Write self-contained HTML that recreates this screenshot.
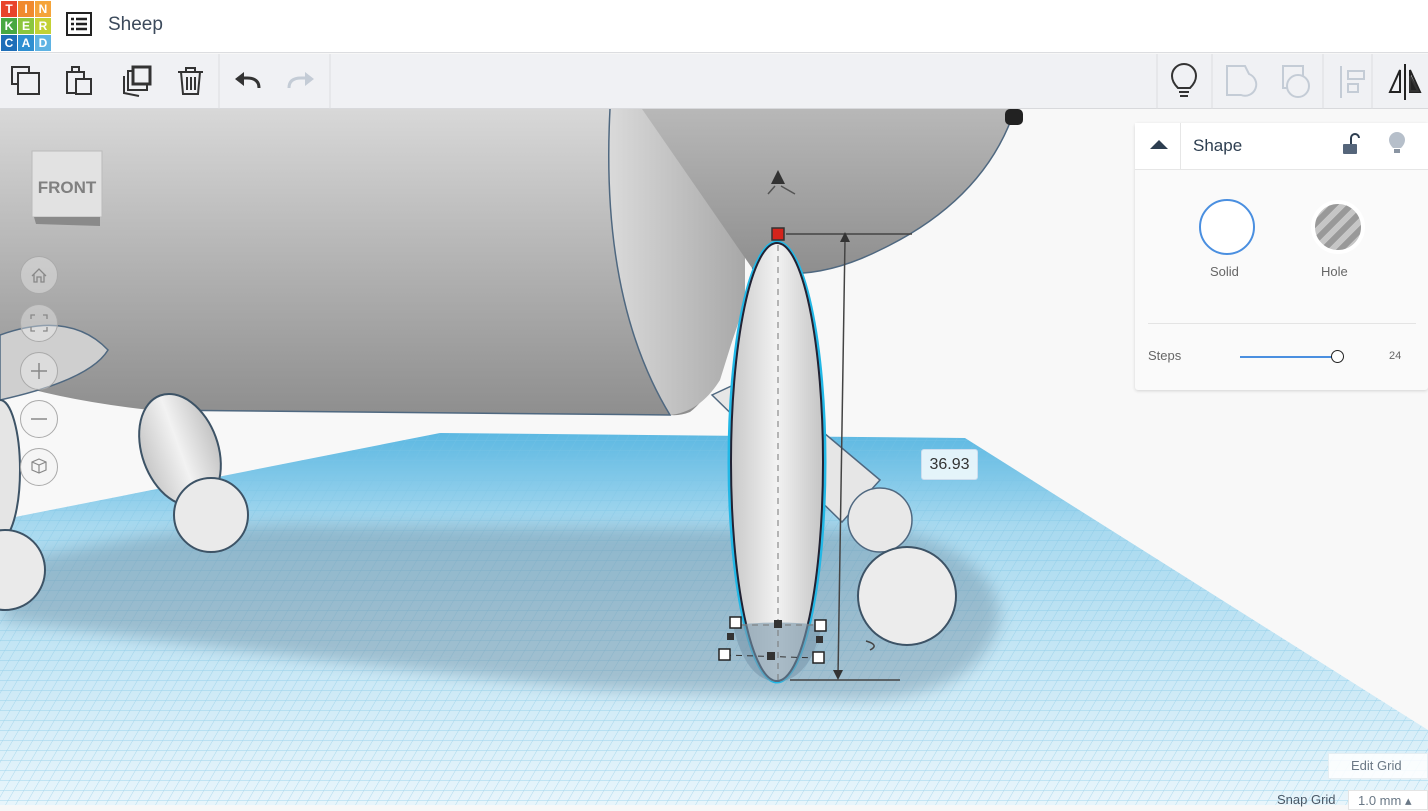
<!DOCTYPE html>
<html><head><meta charset="utf-8"><style>
*{margin:0;padding:0;box-sizing:border-box}
body{width:1428px;height:805px;overflow:hidden;font-family:"Liberation Sans",sans-serif;background:#f7f7f7;position:relative}
.top{position:absolute;left:0;top:0;width:1428px;height:53px;background:#fff;border-bottom:1px solid #dcdde0}
.tb{position:absolute;left:0;top:54px;width:1428px;height:55px;background:#f0f1f4;border-bottom:1px solid #d8d9dc}
.logo{position:absolute;left:1px;top:1px;width:50px;height:50px;display:grid;grid-template-columns:repeat(3,16px);gap:1px}
.logo div{color:#fff;font-weight:bold;font-size:12px;display:flex;align-items:center;justify-content:center}
.panel{position:absolute;left:1135px;top:123px;width:293px;height:267px;background:#fafafa;border-radius:3px;box-shadow:0 1px 3px rgba(0,0,0,.15)}
.ph{height:47px;background:#fff;border-bottom:1px solid #e6e6e6;position:relative}
.vbtn{position:absolute;left:20px;width:38px;height:38px;border-radius:50%;border:1px solid #aaa;background:rgba(240,240,240,.4)}
</style></head><body>
<svg style="position:absolute;left:0;top:0" width="1428" height="805">
<defs>
<linearGradient id="fl" x1="0" y1="0" x2="0" y2="1"><stop offset="0" stop-color="#5cb8e2"/><stop offset=".25" stop-color="#a8d9ef"/><stop offset="1" stop-color="#e8f5fb"/></linearGradient>
<linearGradient id="bd" x1="0" y1="0" x2="0" y2="1"><stop offset="0" stop-color="#d8d8d8"/><stop offset="1" stop-color="#8e8e8e"/></linearGradient>
<linearGradient id="fb" x1="0" y1="0" x2="1" y2="0"><stop offset="0" stop-color="#dadada"/><stop offset="1" stop-color="#a8a8a8"/></linearGradient>
<linearGradient id="hd" x1="0" y1="0" x2="0" y2="1"><stop offset="0" stop-color="#b8b8b8"/><stop offset="1" stop-color="#8e8e8e"/></linearGradient>
<linearGradient id="lg" x1="0" y1="0" x2="1" y2="0"><stop offset="0" stop-color="#c8c8c8"/><stop offset=".5" stop-color="#f2f2f2"/><stop offset="1" stop-color="#c4c4c4"/></linearGradient>
<pattern id="gr" width="10" height="10" patternUnits="userSpaceOnUse" patternTransform="skewX(-30)"><path d="M0 0H10M0 0V10" stroke="#7cc4e4" stroke-width="1" fill="none" opacity=".6"/></pattern>
<filter id="bl"><feGaussianBlur stdDeviation="8"/></filter>
</defs>
<rect x="0" y="109" width="1428" height="696" fill="#f8f8f8"/>
<polygon points="0,520 440,433 965,438 1428,730 1428,805 0,805" fill="url(#fl)"/>
<polygon points="0,520 440,433 965,438 1428,730 1428,805 0,805" fill="url(#gr)"/>
<path d="M20,560 Q200,520 330,525 L900,530 Q1000,560 1000,620 Q980,700 850,700 L600,690 Q300,660 0,620 Z" fill="#6f8fa3" opacity=".45" filter="url(#bl)"/>
<!-- body -->
<path d="M0,109 L745,109 L745,300 Q720,390 690,412 Q680,416 670,415 L150,410 Q60,400 0,380Z" fill="url(#bd)"/>
<path d="M610,109 Q600,300 670,415 Q700,412 720,380 L745,300 L745,109Z" fill="url(#fb)"/>
<path d="M610,109 Q600,300 670,415 L150,410" stroke="#4f6880" stroke-width="1.5" fill="none"/>
<!-- head -->
<path d="M642,109 L1015,109 Q985,200 880,250 Q810,285 752,268 L642,109Z" fill="url(#hd)"/>
<path d="M1015,109 Q985,200 880,250 Q810,285 752,268" stroke="#4f6880" stroke-width="1.5" fill="none"/>
<rect x="1005" y="109" width="18" height="16" rx="5" fill="#222"/>
<!-- left tail -->
<path d="M0,335 Q70,310 108,350 Q90,380 0,400Z" fill="#cfcfcf" stroke="#4f6880" stroke-width="1.5"/>
<!-- legs -->
<ellipse cx="180" cy="450" rx="38" ry="58" transform="rotate(-20 180 450)" fill="url(#lg)" stroke="#3d5366" stroke-width="2"/>
<circle cx="211" cy="515" r="37" fill="#eaeaea" stroke="#3d5366" stroke-width="2"/>
<ellipse cx="0" cy="470" rx="20" ry="70" fill="#e5e5e5" stroke="#3d5366" stroke-width="2"/>
<circle cx="5" cy="570" r="40" fill="#eaeaea" stroke="#3d5366" stroke-width="2"/>
<path d="M712,395 L755,375 L880,480 L842,522Z" fill="#e6e6e6" stroke="#4f6880" stroke-width="1.5"/>
<circle cx="880" cy="520" r="32" fill="#e8e8e8" stroke="#4f6880" stroke-width="1.5"/>
<circle cx="907" cy="596" r="49" fill="#ececec" stroke="#3d5366" stroke-width="2"/>
<!-- selected leg -->
<ellipse cx="777" cy="462" rx="48" ry="220" fill="none" stroke="#22b8e6" stroke-width="3"/>
<ellipse cx="777" cy="462" rx="46" ry="219" fill="url(#lg)" stroke="#223" stroke-width="2"/>
<path d="M733,625 Q777,620 822,625 Q810,680 777,682 Q745,680 733,625Z" fill="#7a98ac" opacity=".6"/>
<line x1="778" y1="245" x2="778" y2="680" stroke="#777" stroke-dasharray="6 5"/>
<line x1="730" y1="625" x2="822" y2="625" stroke="#777" stroke-dasharray="6 5"/>
<line x1="725" y1="655" x2="818" y2="658" stroke="#333" stroke-dasharray="6 5"/>
<line x1="786" y1="234" x2="912" y2="234" stroke="#444" stroke-width="1.5"/>
<line x1="845" y1="240" x2="838" y2="676" stroke="#444" stroke-width="1.5"/>
<polygon points="845,232 840,242 850,242" fill="#333"/>
<polygon points="838,680 833,670 843,670" fill="#333"/>
<line x1="790" y1="680" x2="900" y2="680" stroke="#444" stroke-width="1.5"/>
<rect x="772" y="228" width="12" height="12" fill="#d4241b" stroke="#333" stroke-width="1.5"/>
<polygon points="778,170 771,184 785,184" fill="#333"/>
<path d="M775,186 L768,194 M781,186 L795,194" stroke="#555" stroke-width="1.5"/>
<g fill="#fff" stroke="#222" stroke-width="1.5">
<rect x="730" y="617" width="11" height="11"/><rect x="815" y="620" width="11" height="11"/><rect x="719" y="649" width="11" height="11"/><rect x="813" y="652" width="11" height="11"/></g>
<g fill="#333"><rect x="774" y="620" width="8" height="8"/><rect x="727" y="633" width="7" height="7"/><rect x="816" y="636" width="7" height="7"/><rect x="767" y="652" width="8" height="8"/></g>
<path d="M866,641 Q880,645 870,650" stroke="#444" fill="none" stroke-width="1.5"/>
<rect x="32" y="151" width="70" height="66" fill="#e2e2e2" stroke="#bbb"/>
<polygon points="34,217 100,217 100,226 36,224" fill="#8a8a8a"/>
<text x="67" y="193" text-anchor="middle" font-size="17" font-weight="bold" fill="#808080">FRONT</text>
</svg>
<div class="vbtn" style="top:256px"><svg width="36" height="36"><path d="M11 19 L18 12 L25 19 M13 17 V25 H16 V20 H20 V25 H23 V17" stroke="#888" fill="none" stroke-width="1.3"/></svg></div>
<div class="vbtn" style="top:304px"><svg width="36" height="36"><path d="M10 14V10H14M22 10H26V14M26 22V26H22M14 26H10V22" stroke="#888" fill="none" stroke-width="1.3"/></svg></div>
<div class="vbtn" style="top:352px"><svg width="36" height="36"><path d="M18 10V26M10 18H26" stroke="#888" stroke-width="1.5"/></svg></div>
<div class="vbtn" style="top:400px"><svg width="36" height="36"><path d="M10 18H26" stroke="#888" stroke-width="1.5"/></svg></div>
<div class="vbtn" style="top:448px"><svg width="36" height="36"><path d="M18 10L25 13V21L18 24L11 21V13ZM11 13L18 16L25 13M18 16V24" stroke="#888" fill="none" stroke-width="1.2"/></svg></div>
<div style="position:absolute;left:921px;top:449px;width:57px;height:31px;background:rgba(240,248,252,.9);border:1px solid #cde;border-radius:3px;font-size:16px;color:#333;text-align:center;line-height:30px">36.93</div>
<div class="top">
<div class="logo">
<div style="background:#e8442b">T</div><div style="background:#f08a2e">I</div><div style="background:#f5a43a">N</div>
<div style="background:#48a842">K</div><div style="background:#8cc63e">E</div><div style="background:#c3d135">R</div>
<div style="background:#1e6eb8">C</div><div style="background:#2f8fd1">A</div><div style="background:#5fb3e3">D</div></div>
<svg style="position:absolute;left:66px;top:12px" width="26" height="24"><rect x="1" y="1" width="24" height="22" fill="none" stroke="#222" stroke-width="2"/><path d="M5 7h3M10 7h11M5 12h3M10 12h11M5 17h3M10 17h11" stroke="#222" stroke-width="2.5"/></svg>
<div style="position:absolute;left:108px;top:14px;font-size:19px;color:#3c4a5c">Sheep</div>
</div>
<div class="tb">
<svg width="1428" height="55" style="position:absolute;left:0;top:0" fill="none" stroke="#333" stroke-width="2">
<rect x="12" y="13" width="17" height="17"/><rect x="18" y="19" width="21" height="21" fill="#f0f1f4"/>
<rect x="67" y="18" width="17" height="21"/><rect x="76" y="25" width="15" height="15" fill="#f0f1f4"/><rect x="72" y="13" width="7" height="5"/>
<path d="M124 22v17l15 3"/><rect x="128" y="17" width="19" height="19" fill="#f0f1f4"/><rect x="133" y="13" width="17" height="17" fill="#f0f1f4" stroke-width="3"/>
<path d="M178 18h25M186 18v-4h9v4M181 18l2 22h15l2-22M187 23v13M191 23v13M195 23v13"/>
<line x1="219" y1="0" x2="219" y2="55" stroke="#dcdde0" stroke-width="1"/>
<path d="M259 34 q0-10-12-10h-6" stroke-width="3"/><polygon points="235,25 244,18 244,32" fill="#333" stroke="none"/>
<path d="M289 34 q0-10 12-10h6" stroke="#c4ccd6" stroke-width="3"/><polygon points="314,25 305,18 305,32" fill="#c4ccd6" stroke="none"/>
<line x1="330" y1="0" x2="330" y2="55" stroke="#dcdde0" stroke-width="1"/>
<line x1="1157" y1="0" x2="1157" y2="55" stroke="#dcdde0" stroke-width="1"/>
<path d="M1178 34 q-6-6-6-12 a12 12 0 0 1 24 0 q0 6-6 12z M1179 38h10M1180 42h8"/>
<line x1="1212" y1="0" x2="1212" y2="55" stroke="#dcdde0" stroke-width="1"/>
<path d="M1227 12h18l4 8a10 10 0 1 1-8 21h-14z" stroke="#c4ccd6"/>
<rect x="1283" y="12" width="20" height="22" stroke="#c4ccd6"/><circle cx="1298" cy="32" r="11" stroke="#c4ccd6" fill="#f0f1f4"/>
<line x1="1323" y1="0" x2="1323" y2="55" stroke="#dcdde0" stroke-width="1"/>
<path d="M1341 12v32M1348 17h16v8h-16zM1348 30h10v8h-10z" stroke="#c4ccd6"/>
<line x1="1372" y1="0" x2="1372" y2="55" stroke="#dcdde0" stroke-width="1"/>
<path d="M1405 10v36M1400 16l-10 22h10zM1410 16l10 22h-10z" stroke="#222"/><polygon points="1410,22 1418,37 1410,37" fill="#222"/>
</svg></div>
<div class="panel">
<div class="ph">
<div style="position:absolute;left:45px;top:0;width:1px;height:47px;background:#e6e6e6"></div>
<svg style="position:absolute;left:14px;top:16px" width="20" height="12"><polygon points="10,1 19,10 1,10" fill="#2d3e50"/></svg>
<div style="position:absolute;left:58px;top:13px;font-size:17px;color:#2d3e50">Shape</div>
<svg style="position:absolute;left:207px;top:9px" width="18" height="24"><path d="M9 12V6a4 4 0 0 1 8 0" stroke="#2d3e50" stroke-width="2" fill="none"/><rect x="1" y="12" width="14" height="10" rx="1" fill="#55657a"/></svg>
<svg style="position:absolute;left:253px;top:8px" width="18" height="26"><path d="M5 17 q-4-4-4-8 a8 8 0 0 1 16 0 q0 4-4 8z" fill="#b6bfca"/><rect x="6" y="18" width="6" height="4" fill="#8a95a3"/></svg>
</div>
<div style="position:absolute;left:64px;top:76px;width:56px;height:56px;border-radius:50%;border:2px solid #4a8fe0;background:#fff"></div>
<div style="position:absolute;left:75px;top:141px;font-size:13px;color:#666">Solid</div>
<div style="position:absolute;left:176px;top:77px;width:54px;height:54px;border-radius:50%;border:4px solid #fff;background:repeating-linear-gradient(-45deg,#999 0 6px,#c6c6c6 6px 12px)"></div>
<div style="position:absolute;left:186px;top:141px;font-size:13px;color:#666">Hole</div>
<div style="position:absolute;left:13px;top:200px;width:268px;height:1px;background:#e4e4e4"></div>
<div style="position:absolute;left:13px;top:225px;font-size:13px;color:#666">Steps</div>
<div style="position:absolute;left:105px;top:233px;width:95px;height:2px;background:#4a8fe0"></div>
<div style="position:absolute;left:196px;top:227px;width:13px;height:13px;border-radius:50%;border:1.5px solid #222;background:#fff"></div>
<div style="position:absolute;left:254px;top:227px;font-size:11px;color:#666">24</div>
</div>
<div style="position:absolute;left:1328px;top:753px;width:100px;height:26px;background:rgba(255,255,255,.85);border:1px solid #e6eef2;font-size:13px;color:#6a7886;line-height:24px;padding-left:22px">Edit Grid</div>
<div style="position:absolute;left:1277px;top:792px;font-size:13px;color:#4a5866">Snap Grid</div>
<div style="position:absolute;left:1348px;top:790px;width:80px;height:20px;background:#fff;border:1px solid #e4e4e4;font-size:13px;color:#6a7886;padding-left:9px;line-height:20px">1.0 mm ▴</div>
</body></html>
